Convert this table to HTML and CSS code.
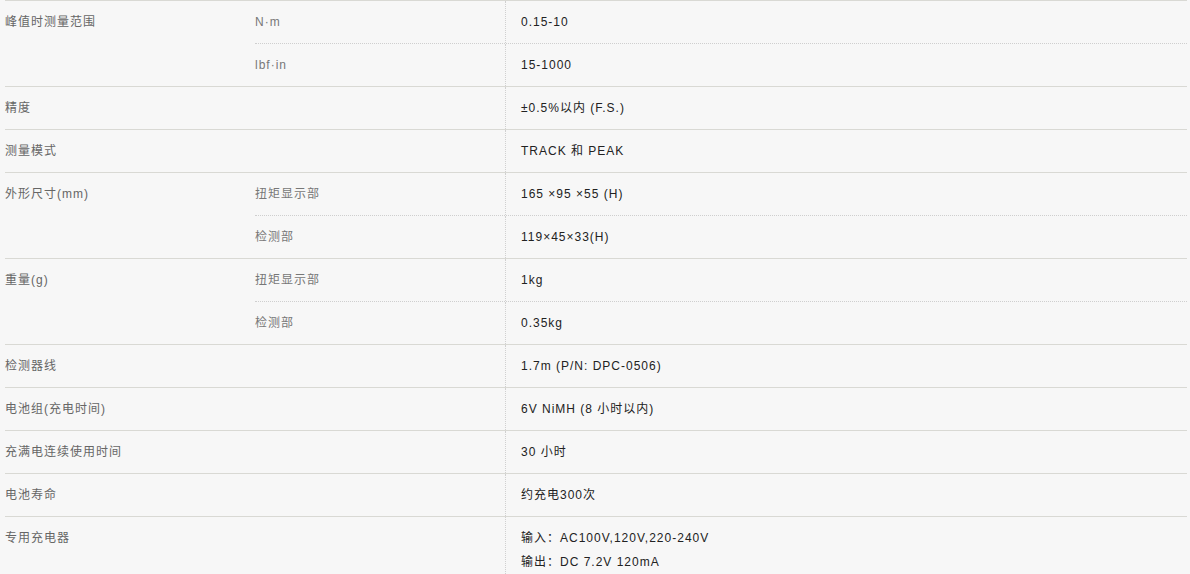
FILE: index.html
```html
<!DOCTYPE html>
<html lang="zh-CN">
<head>
<meta charset="utf-8">
<link rel="stylesheet" href="styles.css">
</head>
<body>
<div class="spec">
  <div class="sec">
    <div class="lbl">峰值时测量范围</div>
    <div class="subs">
      <div class="sub"><div class="k">N·m</div><div class="v">0.15-10</div></div>
      <div class="sub"><div class="k">lbf·in</div><div class="v">15-1000</div></div>
    </div>
  </div>
  <div class="sec">
    <div class="lbl">精度</div>
    <div class="subs">
      <div class="sub"><div class="k"></div><div class="v">±0.5%以内 (F.S.)</div></div>
    </div>
  </div>
  <div class="sec">
    <div class="lbl">测量模式</div>
    <div class="subs">
      <div class="sub"><div class="k"></div><div class="v">TRACK 和 PEAK</div></div>
    </div>
  </div>
  <div class="sec">
    <div class="lbl">外形尺寸(mm)</div>
    <div class="subs">
      <div class="sub"><div class="k">扭矩显示部</div><div class="v">165 ×95 ×55 (H)</div></div>
      <div class="sub"><div class="k">检测部</div><div class="v">119×45×33(H)</div></div>
    </div>
  </div>
  <div class="sec">
    <div class="lbl">重量(g)</div>
    <div class="subs">
      <div class="sub"><div class="k">扭矩显示部</div><div class="v">1kg</div></div>
      <div class="sub"><div class="k">检测部</div><div class="v">0.35kg</div></div>
    </div>
  </div>
  <div class="sec">
    <div class="lbl">检测器线</div>
    <div class="subs">
      <div class="sub"><div class="k"></div><div class="v">1.7m (P/N: DPC-0506)</div></div>
    </div>
  </div>
  <div class="sec">
    <div class="lbl">电池组(充电时间)</div>
    <div class="subs">
      <div class="sub"><div class="k"></div><div class="v">6V NiMH (8 小时以内)</div></div>
    </div>
  </div>
  <div class="sec">
    <div class="lbl">充满电连续使用时间</div>
    <div class="subs">
      <div class="sub"><div class="k"></div><div class="v">30 小时</div></div>
    </div>
  </div>
  <div class="sec">
    <div class="lbl">电池寿命</div>
    <div class="subs">
      <div class="sub"><div class="k"></div><div class="v">约充电300次</div></div>
    </div>
  </div>
  <div class="sec">
    <div class="lbl">专用充电器</div>
    <div class="subs">
      <div class="sub"><div class="k"></div><div class="v multi"><p>输入：AC100V,120V,220-240V</p><p>输出：DC 7.2V 120mA</p></div></div>
    </div>
  </div>
</div>
</body>
</html>
```

FILE: styles.css
```css
html, body {
  margin: 0;
  padding: 0;
  background: #f7f7f7;
}
body {
  font-family: "Liberation Sans", "Noto Sans CJK SC", sans-serif;
  font-size: 12px;
  letter-spacing: 1px;
  overflow: hidden;
}
.spec {
  width: 1182px;
  margin-left: 5px;
}
.sec {
  display: grid;
  grid-template-columns: 250px 1fr;
  border-top: 1px solid #d9d9d4;
}
.lbl {
  color: #666;
  line-height: 42px;
}
.sub {
  display: grid;
  grid-template-columns: 250px 1fr;
  height: 42px;
}
.sub + .sub {
  border-top: 1px dotted #cfcfcf;
}
.k {
  color: #777;
  line-height: 42px;
}
.v {
  color: #222;
  line-height: 42px;
  padding-left: 15px;
  border-left: 1px dotted #d0d0d0;
}
.v.multi {
  line-height: 24px;
  padding-top: 9px;
  height: 60px;
}
.sub:has(.multi) {
  height: 60px;
}
.v.multi p {
  margin: 0;
}
```
